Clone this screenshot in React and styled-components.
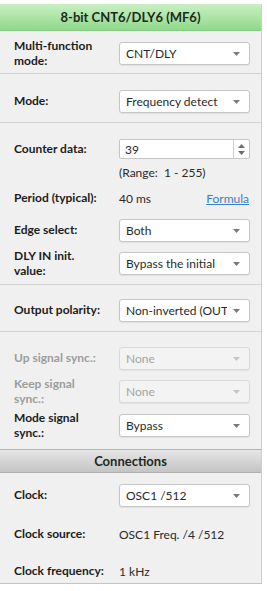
import React from 'react'
import styled, { createGlobalStyle } from 'styled-components'

const GlobalStyle = createGlobalStyle`
  body {
    margin: 0;
    background: #ffffff;
    font-family: Lato, "Open Sans", sans-serif;
  }
`;

const Panel = styled.div`
  width: 261px;
  margin-top: 4px;
  background: #f0f0f0;
  border-right: 1px solid #cfcfcf;
  border-bottom: 1px solid #c4c4c4;
  padding-bottom: 3px;
  color: #1c1c1c;
  font-size: 12px;
`;

const TitleBar = styled.div`
  height: 26px;
  display: flex;
  align-items: center;
  justify-content: center;
  font-weight: 700;
  font-size: 13px;
  color: #1d2a1b;
  border-bottom: 1px solid #86c984;
  background: ${p => p.$grey
    ? 'linear-gradient(#e6e6e6, #c4c4c4)'
    : 'linear-gradient(#c9f0c3, #8fd98b)'};
  ${p => p.$grey && 'border-top: 1px solid #b4b4b4; border-bottom: 1px solid #b0b0b0; height: 22px;'}
`;

const Section = styled.div`
  display: flex;
  flex-direction: column;
  padding: ${p => p.$pad || '10px 0'};
  border-bottom: ${p => p.$last ? 'none' : '1px solid #d2d2d2'};
`;

const Row = styled.div`
  display: grid;
  grid-template-columns: 105px 131px;
  grid-template-rows: ${p => p.$h || 23}px;
  align-items: center;
  padding-left: 14px;
  margin-top: ${p => p.$mt || 0}px;
`;

const Label = styled.div`
  font-weight: 700;
  line-height: 14.5px;
  color: ${p => p.$disabled ? '#9c9c9c' : '#1c1c1c'};
`;

const Value = styled.div`
  color: #2a2a2a;
  display: flex;
  justify-content: space-between;
`;

const Formula = styled.span`
  color: #3b7fc4;
  text-decoration: underline;
  margin-right: 1px;
`;

const SelectBox = styled.div`
  height: 23px;
  box-sizing: border-box;
  display: flex;
  align-items: center;
  justify-content: space-between;
  padding: 0 9px 0 6px;
  border: 1px solid ${p => p.$disabled ? '#dadada' : '#c6c6c6'};
  border-radius: 3px;
  background: ${p => p.$disabled ? '#f3f3f3' : '#ffffff'};
  color: ${p => p.$disabled ? '#a4a4a4' : '#2a2a2a'};
  box-shadow: 0 1px 1px rgba(0, 0, 0, 0.06);
  white-space: nowrap;
  overflow: hidden;
`;

const SelectText = styled.span`
  overflow: hidden;
  flex: 1;
`;

const Arrow = styled.svg`
  flex: none;
  margin-left: 6px;
`;

const SpinBox = styled.div`
  height: 20px;
  box-sizing: border-box;
  display: flex;
  border: 1px solid #c6c6c6;
  border-radius: 2px;
  background: #ffffff;
  color: #2a2a2a;
`;

const SpinText = styled.div`
  flex: 1;
  display: flex;
  align-items: center;
  padding-left: 5px;
`;

const SpinButtons = styled.div`
  width: 15px;
  border-left: 1px solid #d0d0d0;
  display: flex;
  align-items: center;
  justify-content: center;
`;

const Select = ({ value, disabled }) => (
  <SelectBox $disabled={disabled}>
    <SelectText>{value}</SelectText>
    <Arrow width="7" height="4" viewBox="0 0 7 4">
      <path d="M0 0 L7 0 L3.5 4 Z" fill={disabled ? '#c4c4c4' : '#7a7a7a'} />
    </Arrow>
  </SelectBox>
);

const App = () => {
  return (
    <>
      <GlobalStyle />
      <Panel>
        <TitleBar>8-bit CNT6/DLY6 (MF6)</TitleBar>

        <Section $pad="11px 0 8px">
          <Row>
            <Label>Multi-function<br />mode:</Label>
            <Select value="CNT/DLY" />
          </Row>
        </Section>

        <Section $pad="16px 0 9px">
          <Row>
            <Label>Mode:</Label>
            <Select value="Frequency detect" />
          </Row>
        </Section>

        <Section $pad="16px 0 9px">
          <Row $h={20}>
            <Label>Counter data:</Label>
            <SpinBox>
              <SpinText>39</SpinText>
              <SpinButtons>
                <svg width="7" height="11" viewBox="0 0 7 11">
                  <path d="M0 4 L7 4 L3.5 0 Z" fill="#6e6e6e" />
                  <path d="M0 7 L7 7 L3.5 11 Z" fill="#6e6e6e" />
                </svg>
              </SpinButtons>
            </SpinBox>
          </Row>
          <Row $h={14} $mt={6}>
            <span />
            <Value>(Range:&nbsp; 1 - 255)</Value>
          </Row>
          <Row $h={18} $mt={10}>
            <Label>Period (typical):</Label>
            <Value>40 ms<Formula>Formula</Formula></Value>
          </Row>
          <Row $mt={12}>
            <Label>Edge select:</Label>
            <Select value="Both" />
          </Row>
          <Row $mt={10}>
            <Label>DLY IN init.<br />value:</Label>
            <Select value="Bypass the initial" />
          </Row>
        </Section>

        <Section $pad="14px 0 9px">
          <Row>
            <Label>Output polarity:</Label>
            <Select value="Non-inverted (OUT" />
          </Row>
        </Section>

        <Section $pad="15px 0 12px" $last>
          <Row>
            <Label $disabled>Up signal sync.:</Label>
            <Select value="None" disabled />
          </Row>
          <Row $mt={10}>
            <Label $disabled>Keep signal<br />sync.:</Label>
            <Select value="None" disabled />
          </Row>
          <Row $mt={11}>
            <Label>Mode signal<br />sync.:</Label>
            <Select value="Bypass" />
          </Row>
        </Section>

        <TitleBar $grey>Connections</TitleBar>

        <Section $pad="11px 0 0" $last>
          <Row>
            <Label>Clock:</Label>
            <Select value="OSC1 /512" />
          </Row>
          <Row $h={18} $mt={18}>
            <Label>Clock source:</Label>
            <Value>OSC1 Freq. /4 /512</Value>
          </Row>
          <Row $h={18} $mt={19}>
            <Label>Clock frequency:</Label>
            <Value>1 kHz</Value>
          </Row>
        </Section>
      </Panel>
    </>
  )
}

export default App
